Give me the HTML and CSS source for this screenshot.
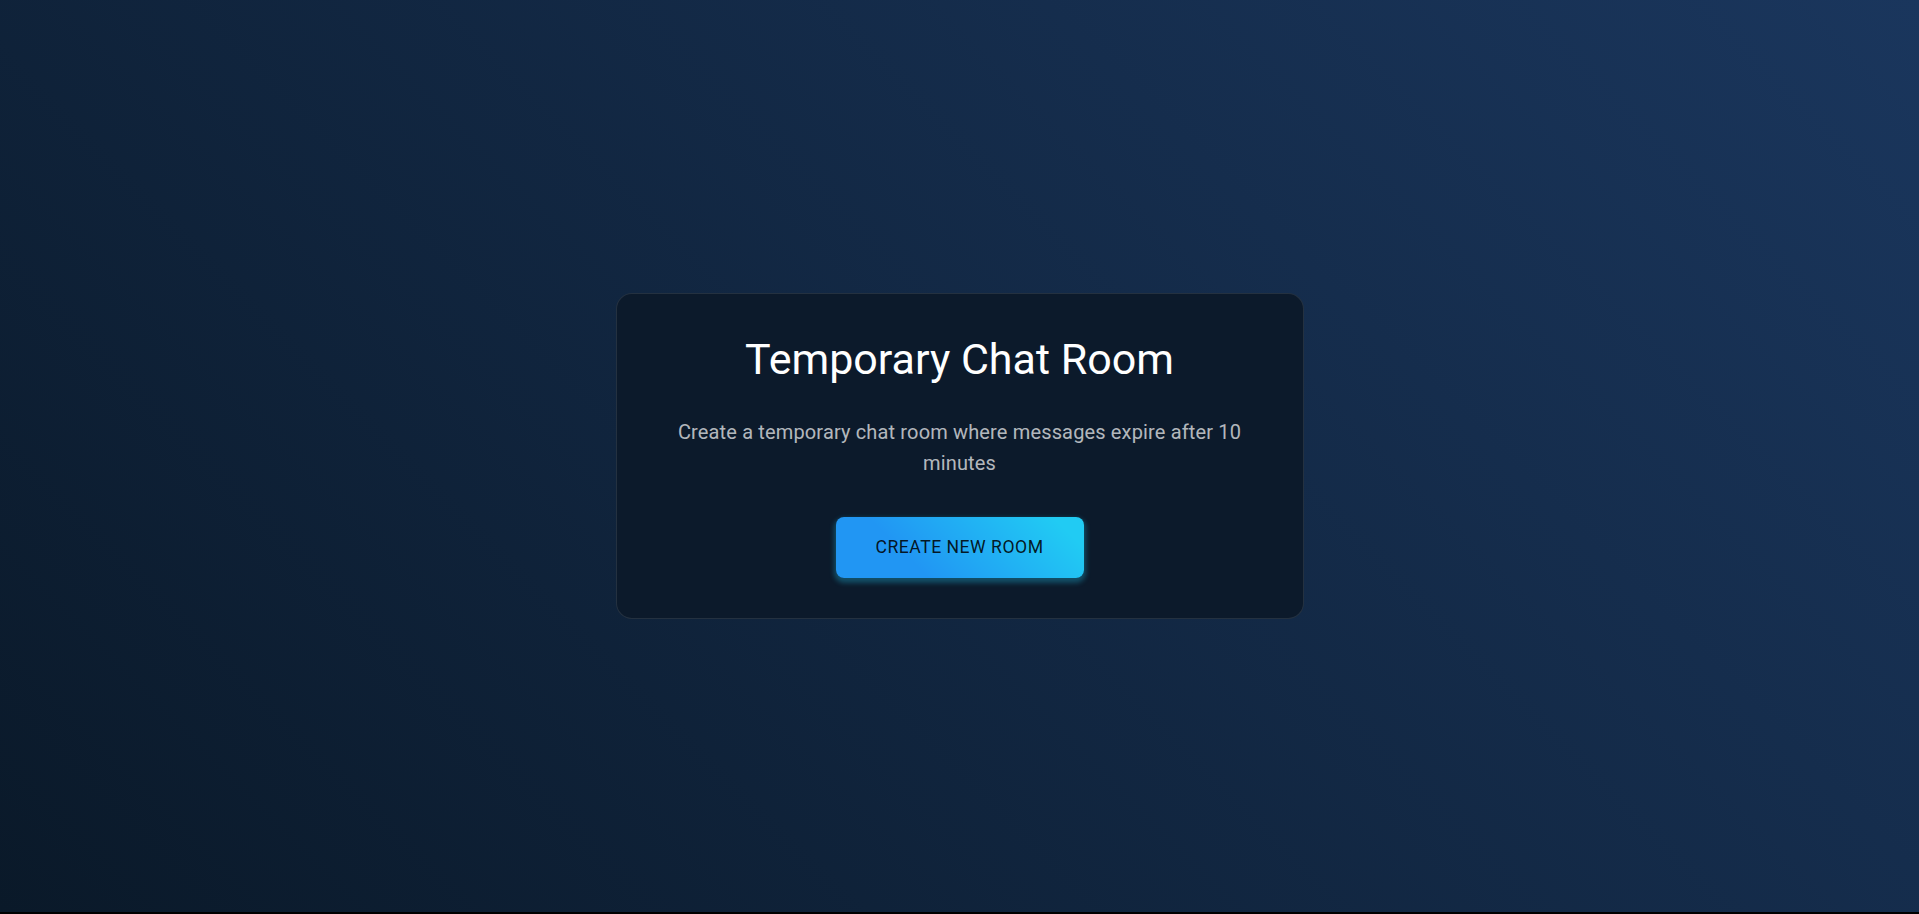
FILE: index.html
```html
<!DOCTYPE html>
<html lang="en">
<head>
<meta charset="utf-8">
<title>Temporary Chat Room</title>
<link rel="stylesheet" href="styles.css">
</head>
<body>
<main class="page">
  <section class="card">
    <h1 class="title">Temporary Chat Room</h1>
    <p class="subtitle">Create a temporary chat room where messages expire after 10 minutes</p>
    <button class="create-btn" type="button">Create New Room</button>
  </section>
</main>
</body>
</html>
```

FILE: styles.css
```css
html {
  background: #000;
}
body {
  margin: 0;
  font-family: Roboto, "Liberation Sans", Arial, sans-serif;
}
.page {
  height: 912px;
  display: flex;
  align-items: center;
  justify-content: center;
  background: linear-gradient(45deg, #0a1929 0%, #1a365d 100%);
}
.card {
  box-sizing: border-box;
  width: 688px;
  padding: 40px;
  background: #0c1a2b;
  border: 1px solid rgba(255, 255, 255, 0.1);
  border-radius: 16px;
  display: flex;
  flex-direction: column;
  align-items: center;
  text-align: center;
}
.title {
  margin: 0 0 33px;
  font-size: 43px;
  font-weight: 400;
  line-height: 1.172;
  color: #fff;
}
.subtitle {
  margin: 0 0 39px;
  font-size: 20px;
  line-height: 30.6px;
  letter-spacing: 0.0075em;
  color: rgba(255, 255, 255, 0.7);
}
.create-btn {
  font-family: inherit;
  font-size: 17.6px;
  font-weight: 400;
  line-height: 1.75;
  letter-spacing: 0.02857em;
  text-transform: uppercase;
  color: rgba(0, 0, 0, 0.87);
  padding: 15px 40px;
  border: 0;
  border-radius: 8px;
  background: linear-gradient(45deg, #2196f3 30%, #21cbf3 90%);
  box-shadow: 0 3px 5px 2px rgba(33, 203, 243, 0.3);
  cursor: pointer;
}
```
